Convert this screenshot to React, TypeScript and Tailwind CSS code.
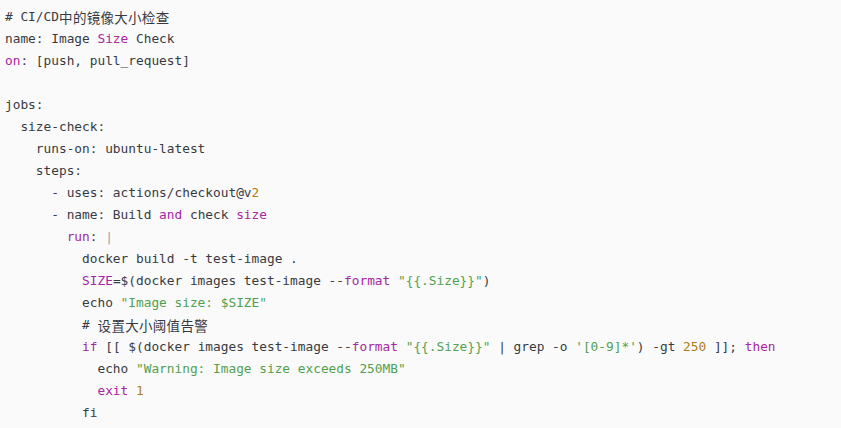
import React from "react";

const P = ({ children }: { children: React.ReactNode }) => <span className="text-[#a626a4]">{children}</span>;
const G = ({ children }: { children: React.ReactNode }) => <span className="text-[#50a14f]">{children}</span>;
const N = ({ children }: { children: React.ReactNode }) => <span className="text-[#b07d0f]">{children}</span>;
const L = ({ children }: { children: React.ReactNode }) => <span className="text-[#a0a1a7]">{children}</span>;
const C = ({ text }: { text: string }) => (
  <>
    {Array.from(text).map((ch, i) => (
      <span
        key={i}
        className="inline-block w-[13.8px] text-center text-[13.5px] leading-[22px] align-top overflow-visible"
        style={{ fontFamily: '"Noto Sans CJK SC", sans-serif' }}
      >
        {ch}
      </span>
    ))}
  </>
);

export default function App() {
  const lines: React.ReactNode[] = [
    <># CI/CD<C text="中的镜像大小检查" /></>,
    <>name: Image <P>Size</P> Check</>,
    <><P>on</P>: [push, pull_request]</>,
    <></>,
    <>jobs:</>,
    <>  size-check:</>,
    <>    runs-on: ubuntu-latest</>,
    <>    steps:</>,
    <>      - uses: actions/checkout@v<N>2</N></>,
    <>      - name: Build <P>and</P> check <P>size</P></>,
    <>        <P>run</P>: <L>|</L></>,
    <>          docker build -t test-image .</>,
    <>          <P>SIZE</P>=$(docker images test-image --<P>format</P> <G>"{"{{.Size}}"}"</G>)</>,
    <>          echo <G>"Image size: $SIZE"</G></>,
    <>          # <C text="设置大小阈值告警" /></>,
    <>          <P>if</P> [[ $(docker images test-image --<P>format</P> <G>"{"{{.Size}}"}"</G> | grep -o <G>'[0-9]*'</G>) -gt <N>250</N> ]]; <P>then</P></>,
    <>            echo <G>"Warning: Image size exceeds 250MB"</G></>,
    <>            <P>exit</P> <N>1</N></>,
    <>          fi</>,
  ];
  return (
    <div className="w-[841px] h-[428px] bg-[#fafafa] overflow-hidden pt-[6px] pl-[5px]">
      <pre
        className="text-[12.8px] leading-[22px] text-[#383a42] m-0"
        style={{ fontFamily: '"DejaVu Sans Mono", "Liberation Mono", monospace' }}
      >
        {lines.map((l, i) => (
          <div key={i} className="h-[22px]">{l}</div>
        ))}
      </pre>
    </div>
  );
}
